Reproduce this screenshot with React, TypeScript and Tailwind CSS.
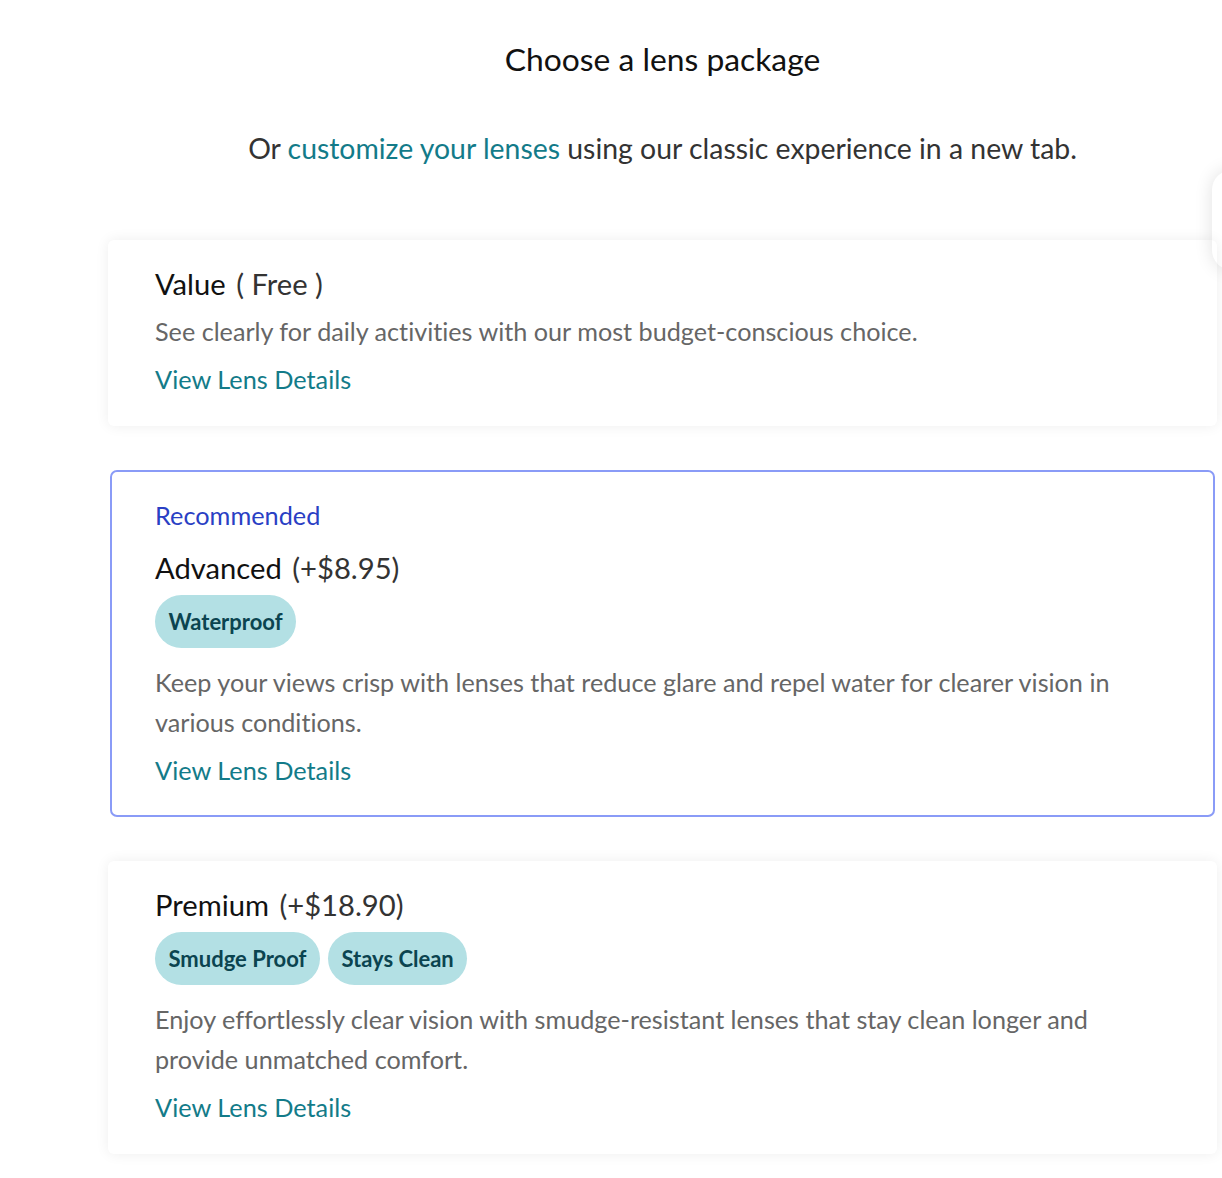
import React from "react";

type LensPackage = {
  name: string;
  price: string;
  description: string;
  tags: string[];
  recommended?: boolean;
};

const packages: LensPackage[] = [
  {
    name: "Value",
    price: "( Free )",
    description: "See clearly for daily activities with our most budget-conscious choice.",
    tags: [],
  },
  {
    name: "Advanced",
    price: "(+$8.95)",
    description:
      "Keep your views crisp with lenses that reduce glare and repel water for clearer vision in various conditions.",
    tags: ["Waterproof"],
    recommended: true,
  },
  {
    name: "Premium",
    price: "(+$18.90)",
    description:
      "Enjoy effortlessly clear vision with smudge-resistant lenses that stay clean longer and provide unmatched comfort.",
    tags: ["Smudge Proof", "Stays Clean"],
  },
];

function PackageCard({ pkg }: { pkg: LensPackage }) {
  const frame = pkg.recommended
    ? "mx-[2px] rounded-[7px] border-2 border-[#8a9bf7] pl-[43px] pr-[45px] pt-[25px] pb-[25px]"
    : "rounded-[6px] shadow-[0_0_14px_rgba(0,0,0,0.07)] pl-[47px] pr-[47px] pt-[26px] pb-[27px]";

  return (
    <div className={`bg-white ${frame}`}>
      {pkg.recommended && (
        <p className="mb-[17px] text-[25.3px] leading-[36px] text-[#2a3fc4]">Recommended</p>
      )}
      <h3 className="text-[29.2px] leading-[36px] text-[#111]">
        {pkg.name} <span className="ml-[3px] text-[#333]">{pkg.price}</span>
      </h3>
      {pkg.tags.length > 0 && (
        <div className="mt-[9px] flex gap-[8px]">
          {pkg.tags.map((tag) => (
            <span
              key={tag}
              className="rounded-full bg-[#b3e0e4] px-[13.5px] text-[22px] font-bold leading-[53px] text-[#0b4450]"
            >
              {tag}
            </span>
          ))}
        </div>
      )}
      <p
        className={`${pkg.tags.length > 0 ? "mt-[14px]" : "mt-[9px]"} max-w-[1000px] text-[25.2px] leading-[40px] text-[#666]`}
      >
        {pkg.description}
      </p>
      <a href="#" className="mt-[8px] block text-[25.3px] leading-[40px] text-[#137b89]">
        View Lens Details
      </a>
    </div>
  );
}

export default function App() {
  return (
    <div className="relative min-h-[1178px] overflow-hidden bg-white font-['Lato','Liberation_Sans',sans-serif] [font-variant-ligatures:none]">
      <div className="pointer-events-none absolute right-[-30px] top-[170px] h-[100px] w-[40px] rounded-full shadow-[0_0_18px_rgba(0,0,0,0.12)]" />
      <div className="ml-[108px] w-[1109px] pt-[39px]">
        <h1 className="text-center text-[31.8px] leading-[40px] text-[#111]">Choose a lens package</h1>
        <p className="mt-[49px] text-center text-[28.4px] leading-[40px] text-[#333]">
          Or <a href="#" className="text-[#137b89]">customize your lenses</a> using our classic
          experience in a new tab.
        </p>
        <div className="mt-[72px] flex flex-col gap-[44px]">
          {packages.map((pkg) => (
            <PackageCard key={pkg.name} pkg={pkg} />
          ))}
        </div>
      </div>
    </div>
  );
}
